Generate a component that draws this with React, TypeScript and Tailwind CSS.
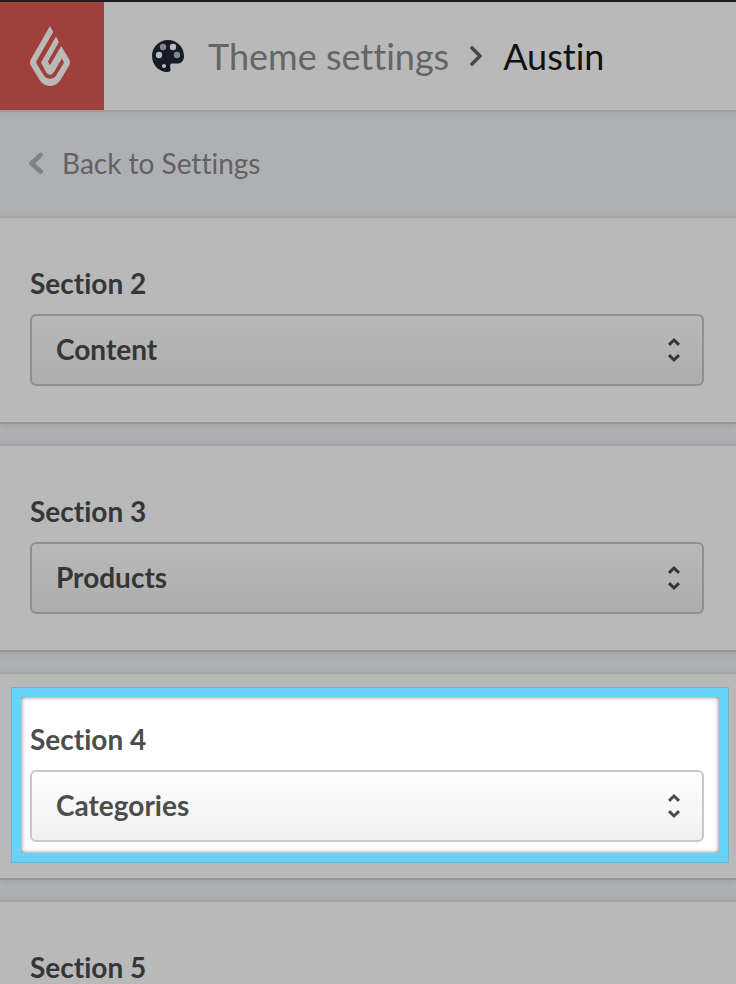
import { useState } from "react";

const options = ["Content", "Products", "Categories", "Brands", "Headline"];

const sections = [
  { id: 2, title: "Section 2", value: "Content" },
  { id: 3, title: "Section 3", value: "Products" },
  { id: 4, title: "Section 4", value: "Categories", highlighted: true },
  { id: 5, title: "Section 5", value: "Brands" },
];

type Section = (typeof sections)[number];

function Logo() {
  return (
    <svg viewBox="30 26 40 60" className="h-[60px] w-10" fill="#b9b9b9" aria-hidden="true">
      <path d="M50 26 L53.2 32 L36.5 61 Q36 62.5 36.5 63.5 L43.5 75 Q46 78.8 50 78.8 Q54 78.8 56.5 75 L64 62.5 L61.8 58.5 L54 72 Q50 78 46 72 L41 62.5 L56 36.5 L59 42 L47.8 61.5 L50 65.2 L61.2 46 L69.2 59.5 Q70.8 62.5 69.2 65.5 L61 79 Q57 86 50 86 Q43 86 39 79 L30.8 65.5 Q29.2 62.5 30.8 59.5 Z" />
    </svg>
  );
}

function PaletteIcon() {
  return (
    <svg viewBox="0 0 32 32" className="size-8" aria-hidden="true">
      <path
        d="M16 0 C7 0 0 7 0 16 C0 25 7 32 15.5 32 C18 32 18.8 31 18.5 29 C18 26.5 17.5 24 20 23.5 H26 C30 23.3 32 20 32 16 C32 7 25 0 16 0 Z"
        fill="#161b29"
      />
      <circle cx="11" cy="7" r="3.2" fill="#85878c" />
      <circle cx="21" cy="7" r="3.2" fill="#b9b9b9" />
      <circle cx="7" cy="15" r="3.2" fill="#b9b9b9" />
      <circle cx="25" cy="15" r="3.2" fill="#85878c" />
      <circle cx="12" cy="26" r="2.1" fill="#b9b9b9" />
    </svg>
  );
}

function SectionField({ section }: { section: Section }) {
  const [value, setValue] = useState(section.value);
  const fieldId = `section-${section.id}`;

  return (
    <>
      <label
        htmlFor={fieldId}
        className={`mb-[14px] block text-[28px] leading-[34px] font-bold ${
          section.highlighted ? "text-[#4b4d4d]" : "text-[#353737]"
        }`}
      >
        {section.title}
      </label>
      <div className="relative">
        <select
          id={fieldId}
          value={value}
          onChange={(e) => setValue(e.target.value)}
          className={`block h-[72px] w-full appearance-none rounded-md border-2 bg-linear-to-b pr-14 pb-0.5 pl-6 text-[28px] font-bold ${
            section.highlighted
              ? "border-[#c5c9cd] from-white to-[#f0f0f0] text-[#4b4d4d]"
              : "border-[#8d9190] from-[#b9b9b9] to-[#adadad] text-[#353737]"
          }`}
        >
          {options.map((option) => (
            <option key={option}>{option}</option>
          ))}
        </select>
        <svg
          viewBox="0 0 12 24"
          className={`pointer-events-none absolute top-6 right-6 h-6 w-3 overflow-visible ${
            section.highlighted ? "text-[#4b4d4d]" : "text-[#353737]"
          }`}
          fill="none"
          stroke="currentColor"
          strokeWidth="3"
          aria-hidden="true"
        >
          <path d="M1 6.8 L6 2 L11 6.8 M1 17.2 L6 22 L11 17.2" />
        </svg>
      </div>
    </>
  );
}

export default function App() {
  return (
    <div className="min-h-screen overflow-hidden bg-[#aeb0b4] font-['Lato',sans-serif] [font-variant-ligatures:none]">
      <header className="relative flex items-stretch border-t-2 border-b-2 border-t-[#1c1c1e] border-b-[#9b9c9d] bg-[#b9b9b9] shadow-[0_2px_4px_rgba(0,0,0,0.06)]">
        <a
          href="#home"
          aria-label="Home"
          className="flex h-[108px] w-26 items-center bg-[#a0403c] pl-[30px]"
        >
          <Logo />
        </a>
        <nav className="flex items-center pl-12 text-4xl" aria-label="Breadcrumb">
          <PaletteIcon />
          <a href="#themes" className="ml-6 text-[#626665]">
            Theme settings
          </a>
          <svg
            viewBox="0 0 12 20"
            className="mx-[21px] h-5 w-3"
            fill="none"
            stroke="#434850"
            strokeWidth="3.6"
            strokeLinecap="round"
            strokeLinejoin="round"
            aria-hidden="true"
          >
            <path d="M2 2 L10 10 L2 18" />
          </svg>
          <span className="text-[#101111]">Austin</span>
        </nav>
      </header>

      <div className="h-26 px-7 pt-[31px]">
        <a href="#settings" className="inline-flex items-center text-[28px] leading-10 text-[#606264]">
          <svg
            viewBox="0 0 16 22"
            className="mr-[18px] h-[22px] w-4"
            fill="none"
            stroke="#7d8483"
            strokeWidth="4.6"
            strokeLinecap="round"
            strokeLinejoin="round"
            aria-hidden="true"
          >
            <path d="M12.7 3 L3.5 11.5 L12.7 19.5" />
          </svg>
          Back to Settings
        </a>
      </div>

      <main className="flex flex-col gap-5">
        {sections.map((section) => (
          <section
            key={section.id}
            className="border-t-2 border-b-2 border-t-[#a3a4a6] border-b-[#959697] bg-[#b9b9b9] shadow-[0_2px_8px_rgba(0,0,0,0.08)]"
          >
            {section.highlighted ? (
              <div className="mt-[13px] mr-[7px] mb-[15px] ml-[11px] border-10 border-[#69d2f9] bg-white pt-[25px] pr-[15px] pb-[11px] pl-[9px] shadow-[inset_0_0_4px_rgba(0,0,0,0.6)] outline-1 -outline-offset-1 outline-[#66b8d6]">
                <SectionField section={section} />
              </div>
            ) : (
              <div className="pt-12 pr-8 pb-9 pl-[30px]">
                <SectionField section={section} />
              </div>
            )}
          </section>
        ))}
      </main>
    </div>
  );
}
